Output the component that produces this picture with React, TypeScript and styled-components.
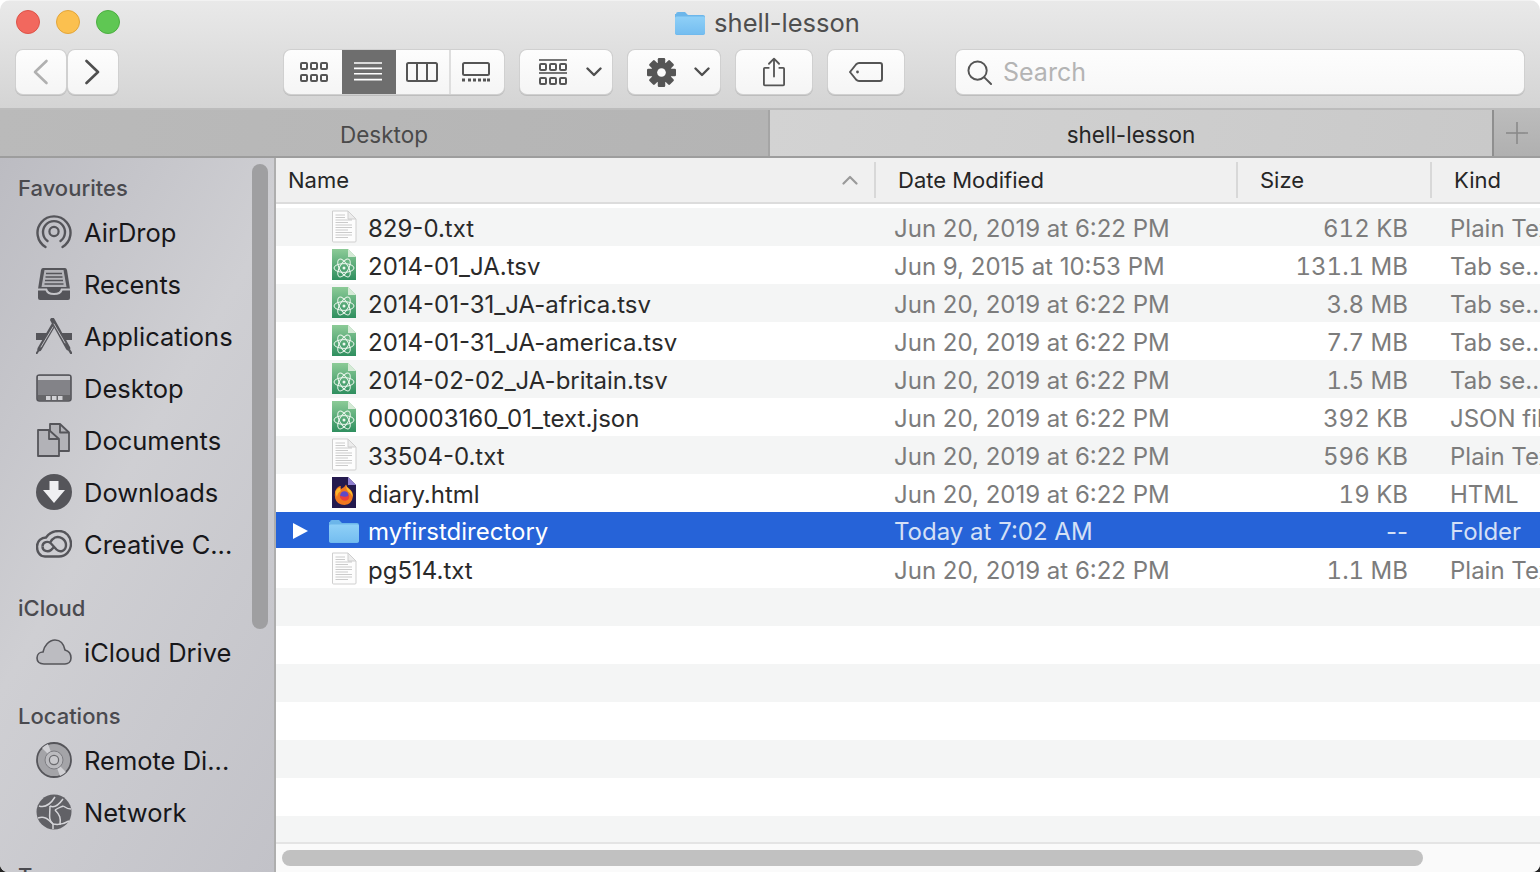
import styled, { createGlobalStyle } from 'styled-components';

const GlobalStyle = createGlobalStyle`
  html, body {
    margin: 0;
    height: 100%;
    overflow: hidden;
    background: linear-gradient(#ffffff 0%, #ffffff 90%, #222222 100%);
  }
  body, input {
    font-family: Inter, "Liberation Sans", sans-serif;
  }
  * {
    box-sizing: border-box;
  }
`;

const ICON = '#55555a';

const Chevron = ({ dir, color = '#4f4f4f' }: { dir: 'left' | 'right'; color?: string }) => (
  <svg width="16" height="26" viewBox="0 0 16 26" fill="none">
    <path
      d={dir === 'left' ? 'M13.5 2 L2 13 L13.5 24' : 'M1.5 2 L13 13 L1.5 24'}
      stroke={color}
      strokeWidth="2.6"
      strokeLinecap="round"
      strokeLinejoin="round"
    />
  </svg>
);

const SmallChevron = () => (
  <svg width="16" height="10" viewBox="0 0 16 10" fill="none">
    <path d="M1.5 1.5 L8 8 L14.5 1.5" stroke="#4f4f4f" strokeWidth="2.4" strokeLinecap="round" strokeLinejoin="round" />
  </svg>
);

const IconsView = () => (
  <svg width="28" height="20" viewBox="0 0 28 20" fill="none" stroke="#555" strokeWidth="2">
    {[1, 11, 21].map((x) =>
      [1, 13].map((y) => <rect key={`${x}-${y}`} x={x} y={y} width="6" height="6" rx="1" />),
    )}
  </svg>
);

const ListView = () => (
  <svg width="28" height="20" viewBox="0 0 28 20" stroke="#fff" strokeWidth="1.6">
    {[1, 6.4, 11.8, 17.6].map((y) => (
      <line key={y} x1="0" x2="28" y1={y} y2={y} />
    ))}
  </svg>
);

const ColumnsView = () => (
  <svg width="32" height="20" viewBox="0 0 32 20" fill="none" stroke="#555" strokeWidth="2">
    <rect x="1" y="1" width="30" height="18" rx="1.5" />
    <line x1="11" x2="11" y1="1" y2="19" />
    <line x1="21" x2="21" y1="1" y2="19" />
  </svg>
);

const GalleryView = () => (
  <svg width="28" height="20" viewBox="0 0 28 20" fill="none">
    <rect x="1" y="1" width="26" height="12" rx="1.5" stroke="#555" strokeWidth="2" />
    {[0, 6, 11, 16, 21, 25].map((x) => (
      <rect key={x} x={x} y="16.5" width="3" height="3" fill="#555" />
    ))}
  </svg>
);

const GroupIcon = () => (
  <svg width="28" height="26" viewBox="0 0 28 26" fill="none" stroke="#555">
    <line x1="0" x2="28" y1="1" y2="1" strokeWidth="1.6" />
    <line x1="0" x2="28" y1="14" y2="14" strokeWidth="1.6" />
    {[1, 11, 21].map((x) =>
      [5, 19].map((y) => <rect key={`${x}-${y}`} x={x} y={y} width="6" height="6" rx="1" strokeWidth="2" />),
    )}
  </svg>
);

const GearIcon = () => (
  <svg width="29" height="29" viewBox="0 0 28 28">
    {[0, 45, 90, 135].map((a) => (
      <rect key={a} x="10.4" y="0" width="7.2" height="28" rx="1.2" fill="#555" transform={`rotate(${a} 14 14)`} />
    ))}
    <circle cx="14" cy="14" r="10" fill="#555" />
    <circle cx="14" cy="14" r="4.2" fill="#fafafa" />
  </svg>
);

const ShareIcon = () => (
  <svg width="22" height="30" viewBox="0 0 24 32" fill="none" stroke="#555" strokeWidth="2">
    <path d="M7 11.5 H2 A1 1 0 0 0 1 12.5 V29.5 A1 1 0 0 0 2 30.5 H22 A1 1 0 0 0 23 29.5 V12.5 A1 1 0 0 0 22 11.5 H17" />
    <path d="M12 21 V1.5 M6.5 7 L12 1.5 L17.5 7" strokeLinecap="round" strokeLinejoin="round" />
  </svg>
);

const TagIcon = () => (
  <svg width="34" height="20" viewBox="0 0 34 20" fill="none" stroke="#555" strokeWidth="2">
    <path d="M10 1 H31 A2 2 0 0 1 33 3 V17 A2 2 0 0 1 31 19 H10 Q8.5 19 7 17.5 L1 10 L7 2.5 Q8.5 1 10 1 Z" strokeLinejoin="round" />
    <circle cx="8.5" cy="10" r="1.4" fill="#555" stroke="none" />
  </svg>
);

const SearchIcon = () => (
  <svg width="25" height="25" viewBox="0 0 26 26" fill="none" stroke="#555" strokeWidth="2">
    <circle cx="11" cy="11" r="9.5" />
    <line x1="18" y1="18" x2="25" y2="25" strokeLinecap="round" />
  </svg>
);

const FolderIcon = ({ width, height }: { width: number; height: number }) => (
  <svg width={width} height={height} viewBox="0 0 30 24">
    <defs>
      <linearGradient id="folderFill" x1="0" y1="0" x2="0" y2="1">
        <stop offset="0" stopColor="#8fd0f7" />
        <stop offset="1" stopColor="#74bdf0" />
      </linearGradient>
    </defs>
    <path d="M1 3 A2 2 0 0 1 3 1 H10 L13 4 H28 A2 2 0 0 1 30 6 V22 A2 2 0 0 1 28 24 H2 A2 2 0 0 1 0 22 V3 Z" fill="#6cb6ea" />
    <path d="M0 7 A1.5 1.5 0 0 1 1.5 5.5 H28.5 A1.5 1.5 0 0 1 30 7 V22 A2 2 0 0 1 28 23.4 H2 A2 2 0 0 1 0 22 Z" fill="url(#folderFill)" />
  </svg>
);

const PageIcon = () => (
  <svg width="26" height="33" viewBox="0 0 26 33">
    <path d="M1.5 1 H17 L25 9 V31 A1 1 0 0 1 24 32 H2.5 A1 1 0 0 1 1.5 31 Z" fill="#fdfdfd" stroke="#cfcfcf" />
    <path d="M17 1 V9 H25 Z" fill="#ececec" stroke="#cfcfcf" strokeLinejoin="round" />
    <g stroke="#b5b5b5" strokeWidth="0.7">
      {[5, 7.5, 10, 12.5, 15, 17.5, 20, 22.5, 25, 27.5].map((y, i) => (
        <line key={y} x1="4.5" x2={y < 10 ? 14 : i % 3 === 0 ? 17 : 21} y1={y} y2={y} />
      ))}
    </g>
  </svg>
);

const AtomIcon = () => (
  <svg width="26" height="33" viewBox="0 0 26 33">
    <defs>
      <linearGradient id="atomFill" x1="0" y1="0" x2="0" y2="1">
        <stop offset="0" stopColor="#8ccb97" />
        <stop offset="1" stopColor="#2f8f5f" />
      </linearGradient>
    </defs>
    <path d="M1 1 H17 L25 9 V32 H1 Z" fill="url(#atomFill)" />
    <path d="M17 1 V9 H25 Z" fill="#d5ead6" />
    <g fill="none" stroke="#eef7ef" strokeWidth="1" transform="translate(13 20)">
      <ellipse rx="10" ry="4.4" />
      <ellipse rx="10" ry="4.4" transform="rotate(60)" />
      <ellipse rx="10" ry="4.4" transform="rotate(120)" />
    </g>
    <circle cx="13" cy="20" r="1.5" fill="#eef7ef" />
  </svg>
);

const FirefoxIcon = () => (
  <svg width="26" height="33" viewBox="0 0 26 33">
    <path d="M1 1 H17 L25 9 V32 H1 Z" fill="#241a4e" />
    <path d="M17 1 V9 H25 Z" fill="#8f7fd0" />
    <path d="M4.2 15 Q6.5 10 10 10 Q9 12 10 13 Q14 11 15 8.5 Q15.5 11 18 12.5 Q22.5 15.5 21.8 21 Q21 28 13.5 29 Q6 29 4.2 22.5 Q3.4 18.5 4.2 15 Z" fill="#f0771f" />
    <path d="M15 9 Q15.5 11.5 18 13 Q22 16 21.5 21 Q20.5 17.5 17 15.5 Q15 13 15 9 Z" fill="#fbc02d" />
    <path d="M4.5 15.5 Q6 12 9.5 11.5 Q8.5 13.5 10 15 Q6.5 16.5 6 21 Q4.2 18.5 4.5 15.5 Z" fill="#fbb52c" />
    <circle cx="13.4" cy="19.6" r="4.3" fill="#5f49c8" />
    <path d="M8.6 19.5 Q10 25.5 15.5 24.6 Q19 23.5 18 18.8 Q16 22.4 8.6 19.5 Z" fill="#ec3f3a" />
  </svg>
);

const AirDropIcon = () => (
  <svg width="36" height="36" viewBox="0 0 36 36" fill="none" stroke={ICON} strokeLinecap="round">
    <path d="M9.5 33 A16.5 16.5 0 1 1 26.5 33" strokeWidth="2.4" />
    <path d="M11.5 27 A11 11 0 1 1 24.5 27" strokeWidth="2.4" />
    <circle cx="18" cy="17.5" r="4.6" strokeWidth="2.2" />
  </svg>
);

const RecentsIcon = () => (
  <svg width="36" height="34" viewBox="0 0 36 34">
    <path d="M7 1 H29 Q30.5 1 31 3 L34 22 V31 Q34 33 32 33 H4 Q2 33 2 31 V22 L5 3 Q5.5 1 7 1 Z" fill={ICON} />
    <path d="M8.5 3 H27.5 L30.5 20 H5.5 Z" fill="#b4b4b9" />
    <g stroke={ICON} strokeWidth="1.5">
      <line x1="10" x2="26" y1="6.5" y2="6.5" />
      <line x1="9.5" x2="26.5" y1="10" y2="10" />
      <line x1="9" x2="27" y1="13.5" y2="13.5" />
      <line x1="8.5" x2="27.5" y1="17" y2="17" />
    </g>
    <path d="M2 21.5 H11 Q12 26 18 26 Q24 26 25 21.5 H34 V23.5 H26.5 Q25 28 18 28 Q11 28 9.5 23.5 H2 Z" fill="#c4c4c8" />
  </svg>
);

const ApplicationsIcon = () => (
  <svg width="36" height="36" viewBox="0 0 36 36" fill="none" strokeLinecap="round">
    <path d="M0 15 H36 V22 H0 Z" fill={ICON} />
    <path d="M12.5 15 H24 L26 22 H10 Z" fill="#c8c8cc" />
    <path d="M18 6 L3.5 31" stroke={ICON} strokeWidth="4.4" />
    <path d="M4 30 L0.5 35.5" stroke={ICON} strokeWidth="2" />
    <path d="M16.5 2 L32 30" stroke={ICON} strokeWidth="4.6" />
    <path d="M32 30 L35 35" stroke={ICON} strokeWidth="2.4" />
    <path d="M17 9 L5 29" stroke="#bcbcc1" strokeWidth="1" />
    <path d="M18 6 L29 25" stroke="#bcbcc1" strokeWidth="1" />
  </svg>
);

const DesktopIcon = () => (
  <svg width="36" height="28" viewBox="0 0 36 28">
    <rect x="1" y="1" width="34" height="26" rx="2.5" fill="#838388" stroke={ICON} strokeWidth="1.6" />
    <rect x="2" y="2" width="32" height="4" fill="#c8c8cc" />
    <rect x="2" y="21" width="32" height="5" fill="#666669" />
    {[10, 16, 22].map((x) => (
      <rect key={x} x={x} y="22" width="4.5" height="4" fill="#d2d2d6" />
    ))}
  </svg>
);

const DocumentsIcon = () => (
  <svg width="34" height="34" viewBox="0 0 34 34" stroke={ICON} strokeWidth="1.8" strokeLinejoin="round">
    <path d="M13 1 H23 L32 9.5 V28 H13 Z" fill="#b2b2b7" />
    <path d="M23 1 V9.5 H32" fill="none" />
    <path d="M1 7 H12 L22 16 V33 H1 Z" fill="#b2b2b7" />
    <path d="M12 7 V16 H22" fill="none" />
  </svg>
);

const DownloadsIcon = () => (
  <svg width="36" height="36" viewBox="0 0 36 36">
    <circle cx="18" cy="18" r="18" fill={ICON} />
    <path d="M13.5 7 H22.5 V16 H29 L18 29 L7 16 H13.5 Z" fill="#f0f0f2" />
  </svg>
);

const CreativeCloudIcon = () => (
  <svg width="36" height="28" viewBox="0 0 36 28" fill="none" stroke={ICON} strokeWidth="2.4">
    <path d="M9 26.5 C3 26.5 1 21 1 16.5 C1 11 5.5 7.5 10 7.5 C13 3 18 1 23 1 C30 1 35 7 35 13.5 C35 21 29.5 26.5 23 26.5 Z" />
    <path d="M6.5 16.5 C6.5 12 12 10.5 15 13.5 L20.5 19.5 C24 23 30 21 30 15 C30 9.5 24 5.5 19 7.5 C17 8.5 15.5 10 14.5 12" />
    <path d="M6.5 16.5 C6.5 21 12 22.5 15 20 L18 17" />
  </svg>
);

const CloudIcon = () => (
  <svg width="36" height="26" viewBox="0 0 36 26">
    <path
      d="M8 25 C3 25 1 22 1 19 C1 15 4 13 7 13 C8 7 13 1 19 1 C25 1 28 6 29 11 C33 12 35 15 35 19 C35 23 32 25 29 25 Z"
      fill="#bcbcc1"
      stroke={ICON}
      strokeWidth="1.6"
    />
  </svg>
);

const DiscIcon = () => (
  <svg width="36" height="36" viewBox="0 0 36 36">
    <circle cx="18" cy="18" r="17" fill="#a4a4a8" stroke={ICON} strokeWidth="1.8" />
    <path d="M18 18 L6 6 A17 17 0 0 1 12 2 Z M18 18 L30 30 A17 17 0 0 1 24 34 Z" fill="#d0d0d4" />
    <circle cx="18" cy="18" r="9" fill="#bbbbbf" stroke="#7d7d82" />
    <circle cx="18" cy="18" r="4.6" fill="#c8c8cc" stroke="#6a6a6e" strokeWidth="1.2" />
  </svg>
);

const NetworkIcon = () => (
  <svg width="36" height="36" viewBox="0 0 36 36" fill="none">
    <circle cx="18" cy="18" r="17.5" fill="#616166" />
    <g stroke="#d4d4d8" strokeWidth="1.5">
      <path d="M3 12 C9 14 14 11 19 3" />
      <path d="M14 12 C18 14 22 12 27 5" />
      <path d="M14 12 C14 20 12 26 17 30 L17 35" />
      <path d="M19 16 C24 21 25 24 24 31" />
      <path d="M2 24 C8 22 11 24 17 30 C22 31 28 30 33 27" />
      <path d="M27 12 C30 14 33 15 35 15" />
      <path d="M19 16 C22 14 25 13 27 12" />
    </g>
  </svg>
);

const Plus = () => (
  <svg width="22" height="22" viewBox="0 0 22 22" stroke="#8a8a8a" strokeWidth="1.6">
    <line x1="11" x2="11" y1="0" y2="22" />
    <line x1="0" x2="22" y1="11" y2="11" />
  </svg>
);

const SortUp = () => (
  <svg width="16" height="10" viewBox="0 0 16 10" fill="none">
    <path d="M1.5 8.5 L8 2 L14.5 8.5" stroke="#9a9a9a" strokeWidth="2.2" strokeLinecap="round" strokeLinejoin="round" />
  </svg>
);

const favourites = [
  { label: 'AirDrop', icon: <AirDropIcon /> },
  { label: 'Recents', icon: <RecentsIcon /> },
  { label: 'Applications', icon: <ApplicationsIcon /> },
  { label: 'Desktop', icon: <DesktopIcon /> },
  { label: 'Documents', icon: <DocumentsIcon /> },
  { label: 'Downloads', icon: <DownloadsIcon /> },
  { label: 'Creative C...', icon: <CreativeCloudIcon /> },
];

const sections = [
  { title: 'Favourites', items: favourites },
  { title: 'iCloud', items: [{ label: 'iCloud Drive', icon: <CloudIcon /> }] },
  {
    title: 'Locations',
    items: [
      { label: 'Remote Di...', icon: <DiscIcon /> },
      { label: 'Network', icon: <NetworkIcon /> },
    ],
  },
  { title: 'Tags', items: [] },
];

type FileKind = 'page' | 'atom' | 'firefox' | 'folder';

const files: { name: string; type: FileKind; date: string; size: string; kind: string; selected?: boolean }[] = [
  { name: '829-0.txt', type: 'page', date: 'Jun 20, 2019 at 6:22 PM', size: '612 KB', kind: 'Plain Text' },
  { name: '2014-01_JA.tsv', type: 'atom', date: 'Jun 9, 2015 at 10:53 PM', size: '131.1 MB', kind: 'Tab se...' },
  { name: '2014-01-31_JA-africa.tsv', type: 'atom', date: 'Jun 20, 2019 at 6:22 PM', size: '3.8 MB', kind: 'Tab se...' },
  { name: '2014-01-31_JA-america.tsv', type: 'atom', date: 'Jun 20, 2019 at 6:22 PM', size: '7.7 MB', kind: 'Tab se...' },
  { name: '2014-02-02_JA-britain.tsv', type: 'atom', date: 'Jun 20, 2019 at 6:22 PM', size: '1.5 MB', kind: 'Tab se...' },
  { name: '000003160_01_text.json', type: 'atom', date: 'Jun 20, 2019 at 6:22 PM', size: '392 KB', kind: 'JSON file' },
  { name: '33504-0.txt', type: 'page', date: 'Jun 20, 2019 at 6:22 PM', size: '596 KB', kind: 'Plain Text' },
  { name: 'diary.html', type: 'firefox', date: 'Jun 20, 2019 at 6:22 PM', size: '19 KB', kind: 'HTML' },
  { name: 'myfirstdirectory', type: 'folder', date: 'Today at 7:02 AM', size: '--', kind: 'Folder', selected: true },
  { name: 'pg514.txt', type: 'page', date: 'Jun 20, 2019 at 6:22 PM', size: '1.1 MB', kind: 'Plain Text' },
];

const emptyRows = Array.from({ length: 7 }, (_, i) => i);

function fileIcon(type: FileKind) {
  if (type === 'atom') return <AtomIcon />;
  if (type === 'firefox') return <FirefoxIcon />;
  if (type === 'folder') return <FolderIcon width={30} height={24} />;
  return <PageIcon />;
}

export default function App() {
  return (
    <>
      <GlobalStyle />
      <Window>
        <TitleBar>
          <TitleRow>
            <Lights>
              <Light $color="#f2685e" $edge="#dd5348" />
              <Light $color="#fbc04f" $edge="#e2a53a" />
              <Light $color="#5fc753" $edge="#4cae41" />
            </Lights>
            <FolderIcon width={30} height={24} />
            <Title>shell-lesson</Title>
          </TitleRow>
          <Toolbar>
            <NavGroup>
              <ToolButton $width={50}>
                <Chevron dir="left" color="#b0b0b0" />
              </ToolButton>
              <ToolButton $width={50}>
                <Chevron dir="right" />
              </ToolButton>
            </NavGroup>
            <Segments>
              <Segment $width={58} $left={2}>
                <IconsView />
              </Segment>
              <Segment $width={54} $active $right={2}>
                <ListView />
              </Segment>
              <Segment $width={53} $right={2}>
                <ColumnsView />
              </Segment>
              <Segment $width={55} $divider $right={4}>
                <GalleryView />
              </Segment>
            </Segments>
            <ToolButton $width={92} $gap={19} $left={9}>
              <GroupIcon />
              <SmallChevron />
            </ToolButton>
            <ToolButton $width={92} $gap={18} $left={9}>
              <GearIcon />
              <SmallChevron />
            </ToolButton>
            <ToolButton $width={76}>
              <ShareIcon />
            </ToolButton>
            <ToolButton $width={76}>
              <TagIcon />
            </ToolButton>
            <SearchBox>
              <SearchIcon />
              <SearchText>Search</SearchText>
            </SearchBox>
          </Toolbar>
        </TitleBar>

        <TabBar>
          <Tab>Desktop</Tab>
          <Tab $active>shell-lesson</Tab>
          <NewTab>
            <Plus />
          </NewTab>
        </TabBar>

        <Body>
          <Sidebar>
            <SidebarThumb />
            {sections.map((section) => (
              <Section key={section.title}>
                <SectionLabel>{section.title}</SectionLabel>
                {section.items.map((item) => (
                  <SideItem key={item.label}>
                    <SideIcon>{item.icon}</SideIcon>
                    {item.label}
                  </SideItem>
                ))}
              </Section>
            ))}
          </Sidebar>

          <Content>
            <Header>
              <HeaderCell $between>
                Name
                <SortUp />
              </HeaderCell>
              <HeaderCell $divider>Date Modified</HeaderCell>
              <HeaderCell $divider>Size</HeaderCell>
              <HeaderCell $divider>Kind</HeaderCell>
            </Header>
            <Rows>
              {files.map((file, i) => (
                <Row key={file.name} $striped={i % 2 === 0} $selected={file.selected}>
                  <NameCell>
                    <Disclosure>{file.type === 'folder' && <Triangle />}</Disclosure>
                    <FileIcon $raise={file.type !== 'folder'}>{fileIcon(file.type)}</FileIcon>
                    <FileName $selected={file.selected}>{file.name}</FileName>
                  </NameCell>
                  <DateCell $selected={file.selected}>{file.date}</DateCell>
                  <SizeCell $selected={file.selected}>{file.size}</SizeCell>
                  <KindCell $selected={file.selected}>{file.kind}</KindCell>
                </Row>
              ))}
              {emptyRows.map((i) => (
                <Row key={i} $striped={i % 2 === 0} />
              ))}
            </Rows>
            <ScrollTrack>
              <ScrollThumb />
            </ScrollTrack>
          </Content>
        </Body>
      </Window>
    </>
  );
}

const Window = styled.div`
  height: 872px;
  width: 1540px;
  display: flex;
  flex-direction: column;
  overflow: hidden;
  border-radius: 10px 10px 8px 8px;
  background: #fff;
`;

const TitleBar = styled.div`
  height: 110px;
  flex: none;
  display: flex;
  flex-direction: column;
  background: linear-gradient(#e9e9e9, #d4d4d4);
  border-top: 1px solid #f2f2f2;
  border-bottom: 2px solid #bcbcbc;
`;

const TitleRow = styled.div`
  position: relative;
  height: 48px;
  display: flex;
  align-items: center;
  justify-content: center;
  gap: 9px;
  padding: 0 5px 4px 0;
`;

const Lights = styled.div`
  position: absolute;
  left: 16px;
  top: 9px;
  display: flex;
  gap: 16px;
`;

const Light = styled.span<{ $color: string; $edge: string }>`
  width: 24px;
  height: 24px;
  border-radius: 50%;
  background: ${(p) => p.$color};
  border: 1px solid ${(p) => p.$edge};
`;

const Title = styled.span`
  font-size: 25.5px;
  color: #4e4e4e;
  line-height: 30px;
`;

const Toolbar = styled.div`
  display: flex;
  align-items: center;
  gap: 16px;
  padding: 1px 16px 0;
`;

const NavGroup = styled.div`
  display: flex;
  gap: 2px;
  margin-right: 150px;
`;

const ToolButton = styled.div<{ $width: number; $gap?: number; $left?: number }>`
  width: ${(p) => p.$width}px;
  height: 44px;
  display: flex;
  align-items: center;
  justify-content: center;
  gap: ${(p) => p.$gap ?? 0}px;
  padding-left: ${(p) => p.$left ?? 0}px;
  border-radius: 7px;
  background: linear-gradient(#fdfdfd, #f5f5f5);
  box-shadow: 0 0 0 1px #d0d0d0, 0 1px 0 1px #bdbdbd;
`;

const Segments = styled.div`
  display: flex;
  height: 44px;
  border-radius: 7px;
  overflow: hidden;
  box-shadow: 0 0 0 1px #d0d0d0, 0 1px 0 1px #bdbdbd;
`;

const Segment = styled.div<{ $width: number; $active?: boolean; $divider?: boolean; $left?: number; $right?: number }>`
  width: ${(p) => p.$width}px;
  display: flex;
  align-items: center;
  justify-content: center;
  padding: 0 ${(p) => p.$right ?? 0}px 0 ${(p) => p.$left ?? 0}px;
  background: ${(p) => (p.$active ? '#6e6e6e' : 'linear-gradient(#fdfdfd, #f5f5f5)')};
  border-left: ${(p) => (p.$divider ? '2px solid #dedede' : 'none')};
`;

const SearchBox = styled.div`
  flex: 1;
  height: 44px;
  margin-left: 36px;
  display: flex;
  align-items: center;
  gap: 11px;
  padding-left: 11px;
  border-radius: 7px;
  background: linear-gradient(#fdfdfd, #f7f7f7);
  box-shadow: 0 0 0 1px #d0d0d0, 0 1px 0 1px #bdbdbd;
`;

const SearchText = styled.span`
  font-size: 25px;
  color: #b4b4b4;
`;

const TabBar = styled.div`
  height: 48px;
  flex: none;
  display: flex;
  border-bottom: 2px solid #9d9d9d;
`;

const Tab = styled.div<{ $active?: boolean }>`
  flex: none;
  width: ${(p) => (p.$active ? '724px' : '770px')};
  display: flex;
  align-items: center;
  justify-content: center;
  padding-top: 2px;
  font-size: 22.5px;
  color: ${(p) => (p.$active ? '#262626' : '#4a4a4a')};
  background: ${(p) =>
    p.$active
      ? 'linear-gradient(100deg, #d3d3d3, #c9c9c9)'
      : 'linear-gradient(100deg, #bababa, #b4b4b4)'};
  border-right: 2px solid ${(p) => (p.$active ? '#8f8f8f' : '#a5a5a5')};
`;

const NewTab = styled.div`
  flex: 1;
  display: flex;
  align-items: center;
  justify-content: center;
  background: linear-gradient(#bcbcbc, #b0b0b0);
`;

const Body = styled.div`
  flex: 1;
  min-height: 0;
  display: flex;
`;

const Sidebar = styled.div`
  position: relative;
  flex: none;
  width: 276px;
  overflow: hidden;
  padding-top: 15px;
  background: linear-gradient(120deg, #bcbcc2 0%, #cfcfd3 45%, #c2c2c8 100%);
  border-right: 2px solid #aeaeae;
`;

const SidebarThumb = styled.div`
  position: absolute;
  left: 252px;
  top: 6px;
  width: 16px;
  height: 465px;
  border-radius: 8px;
  background: #9f9fa1;
`;

const Section = styled.div`
  margin-bottom: 22px;
`;

const SectionLabel = styled.div`
  height: 30px;
  line-height: 30px;
  margin-bottom: 4px;
  padding-left: 18px;
  font-size: 22px;
  font-weight: 500;
  color: #4a4a4f;
`;

const SideItem = styled.div`
  height: 52px;
  display: flex;
  align-items: center;
  padding: 0 0 2px 36px;
  gap: 12px;
  font-size: 25.5px;
  color: #17171a;
  white-space: nowrap;
`;

const SideIcon = styled.span`
  width: 36px;
  flex: none;
  display: flex;
  justify-content: center;
  margin-bottom: 1px;
`;

const Content = styled.div`
  flex: 1;
  min-width: 0;
  display: flex;
  flex-direction: column;
`;

const columns = 'grid-template-columns: 598px 362px 194px 1fr;';

const Header = styled.div`
  ${columns}
  display: grid;
  height: 46px;
  flex: none;
  align-items: center;
  background: #f0f0f0;
  border-bottom: 2px solid #dcdcdc;
`;

const HeaderCell = styled.div<{ $divider?: boolean; $between?: boolean }>`
  height: 36px;
  display: flex;
  align-items: center;
  justify-content: ${(p) => (p.$between ? 'space-between' : 'flex-start')};
  padding: ${(p) => (p.$between ? '0 16px 0 12px' : '0 0 0 22px')};
  font-size: 22px;
  color: #262626;
  border-left: ${(p) => (p.$divider ? '2px solid #d8d8d8' : 'none')};
`;

const Rows = styled.div`
  flex: 1;
  min-height: 0;
  overflow: hidden;
  padding-top: 4px;
  background: #fff;
`;

const Row = styled.div<{ $striped?: boolean; $selected?: boolean }>`
  ${columns}
  display: grid;
  height: 38px;
  align-items: center;
  overflow: hidden;
  padding-top: 2px;
  font-size: 24px;
  background-color: ${(p) => (p.$selected ? '#2663d8' : p.$striped ? '#f4f5f5' : '#fff')};
  border-bottom: ${(p) => (p.$selected ? '2px solid #fff' : 'none')};
  background-clip: padding-box;
`;

const NameCell = styled.div`
  display: flex;
  align-items: center;
`;

const Disclosure = styled.span`
  width: 51px;
  flex: none;
  padding-left: 17px;
`;

const Triangle = styled.span`
  display: block;
  width: 0;
  height: 0;
  border-left: 15px solid #fff;
  border-top: 8px solid transparent;
  border-bottom: 8px solid transparent;
`;

const FileIcon = styled.span<{ $raise?: boolean }>`
  width: 34px;
  flex: none;
  margin: 0 7px ${(p) => (p.$raise ? '4px' : '0')} 0;
  display: flex;
  justify-content: center;
`;

const FileName = styled.span<{ $selected?: boolean }>`
  color: ${(p) => (p.$selected ? '#fff' : '#2a2a2a')};
  white-space: nowrap;
`;

const DateCell = styled.div<{ $selected?: boolean }>`
  padding-left: 20px;
  white-space: nowrap;
  color: ${(p) => (p.$selected ? '#d4e0f6' : '#7c7c7c')};
`;

const SizeCell = styled(DateCell)`
  padding: 0 22px 0 0;
  text-align: right;
  font-variant-numeric: ${(p) => (p.$selected ? 'normal' : 'tabular-nums')};
`;

const KindCell = styled(DateCell)`
  overflow: hidden;
`;

const ScrollTrack = styled.div`
  height: 30px;
  flex: none;
  padding: 6px 0 0 6px;
  background: #fafafa;
  border-top: 2px solid #e4e4e4;
`;

const ScrollThumb = styled.div`
  width: 1141px;
  height: 16px;
  border-radius: 8px;
  background: #c1c1c1;
`;
